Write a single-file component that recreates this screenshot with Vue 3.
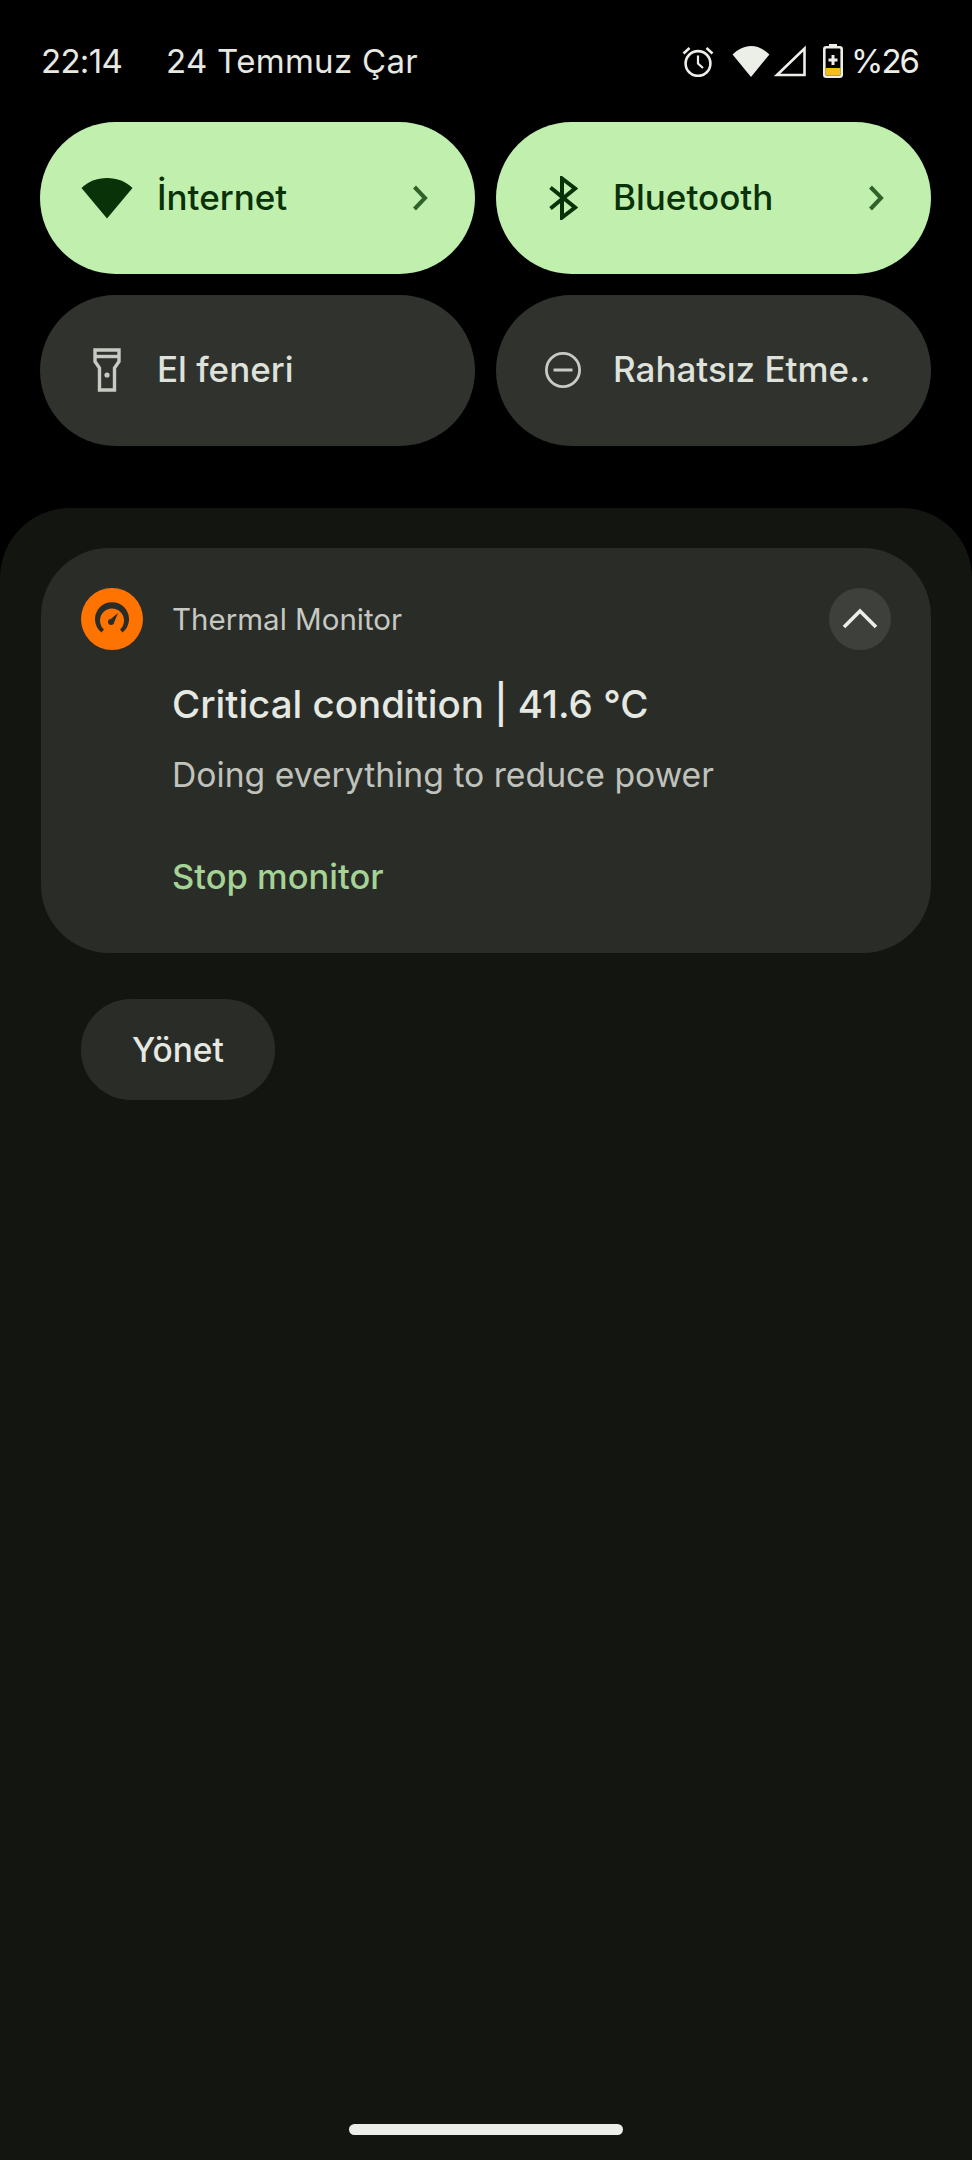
<template>
  <div class="screen">
    <div class="status">
      <span class="time">22:14</span>
      <span class="date">24 Temmuz Çar</span>
      <div class="status-icons">
        <svg class="alarm" viewBox="0 0 32 32" width="32" height="32" fill="none" stroke="#eceee8" stroke-width="2.6">
          <circle cx="16" cy="18.500" r="12.400" />
          <path d="M16 10.500V18.500L21 23" stroke-width="2.200" />
          <path d="M1.500 8.500L7.500 3M30.500 8.500L24.500 3" />
        </svg>
        <svg class="wifi" viewBox="0 0 38 32" width="38" height="32">
          <path d="M19 32L.6 9.500C5.500 4.600 12 1 19 1s13.500 3.600 18.400 8.500z" fill="#eceee8" />
        </svg>
        <svg class="signal" viewBox="0 0 32 32" width="32" height="32" fill="none" stroke="#eceee8" stroke-width="2.6">
          <path d="M3 30L30.500 3.500V30z" />
        </svg>
        <svg class="battery" viewBox="0 0 20 34" width="20" height="34">
          <rect x="6" y="0" width="8" height="4" fill="#eceee8" />
          <rect x="1.300" y="3.300" width="17.400" height="29.400" rx="2" fill="none" stroke="#eceee8" stroke-width="2.600" />
          <rect x="2.500" y="24" width="15" height="7.500" fill="#f4bd1e" />
          <path d="M10 11v10M5.500 16h9" stroke="#eceee8" stroke-width="3" />
        </svg>
        <span class="pct">%26</span>
      </div>
    </div>

    <div class="tiles">
      <div v-for="t in tiles" :key="t.label" class="tile" :class="{ on: t.on }">
        <span class="tile-icon">
          <svg v-if="t.icon === 'wifi'" viewBox="0 0 52 42" width="52" height="42">
            <path d="M26 41.500L.5 11C7 4.500 16 1 26 1s19 3.500 25.500 10z" fill="#0a3208" />
          </svg>
          <svg v-else-if="t.icon === 'bt'" viewBox="0 0 30 44" width="30" height="44" fill="none" stroke="#0a3208" stroke-width="4">
            <path d="M2.500 11.500L27 31.500 14 41.500V2.500L27 12.500 2.500 32.500" />
          </svg>
          <svg v-else-if="t.icon === 'torch'" viewBox="0 0 28 44" width="28" height="44" fill="none" stroke="#c8cac4" stroke-width="3.400">
            <path d="M2 2h24v11.500L21.500 20v22h-15V20L2 13.500z" />
            <path d="M2 8.500h24" />
            <circle cx="14" cy="27" r="2.600" fill="#c8cac4" stroke="none" />
          </svg>
          <svg v-else viewBox="0 0 38 38" width="38" height="38" fill="none" stroke="#c8cac4" stroke-width="2.800">
            <circle cx="19" cy="19" r="16.600" />
            <path d="M9.500 19h19" stroke-width="3" />
          </svg>
        </span>
        <span class="tile-label">{{ t.label }}</span>
        <svg v-if="t.on" class="chev" viewBox="0 0 16 26" width="16" height="26" fill="none" stroke="#2f6128" stroke-width="4">
          <path d="M2.500 2L13 13 2.500 24" />
        </svg>
      </div>
    </div>

    <div class="panel">
      <div class="card">
        <div class="card-head">
          <span class="app-icon">
            <svg viewBox="0 0 36 36" width="36" height="36">
              <path d="M7.500 31.500A17 17 0 1 1 28.500 31.500L26 28.500A12 12 0 1 0 10 28.500z" fill="#2a2c28" />
              <path d="M15 19.500L24 12 19.500 23z" fill="#2a2c28" />
              <circle cx="17" cy="21" r="3" fill="#2a2c28" />
            </svg>
          </span>
          <span class="app-name">Thermal Monitor</span>
          <span class="expand">
            <svg viewBox="0 0 36 22" width="36" height="22" fill="none" stroke="#eceee8" stroke-width="3.600">
              <path d="M2 19L18 3 34 19" />
            </svg>
          </span>
        </div>
        <div class="card-body">
          <div class="title">Critical condition | 41.6 °C</div>
          <div class="subtitle">Doing everything to reduce power</div>
          <div class="action">Stop monitor</div>
        </div>
      </div>
      <div class="manage">Yönet</div>
      <div class="home-bar"></div>
    </div>
  </div>
</template>

<script setup>
const tiles = [
  { label: 'İnternet', icon: 'wifi', on: true },
  { label: 'Bluetooth', icon: 'bt', on: true },
  { label: 'El feneri', icon: 'torch', on: false },
  { label: 'Rahatsız Etme..', icon: 'dnd', on: false },
]
</script>

<style>
html, body {
  margin: 0;
  background: #000;
}
</style>

<style scoped>
.screen {
  width: 972px;
  height: 2160px;
  background: #000;
  display: flex;
  flex-direction: column;
  font-family: "Inter", "Liberation Sans", sans-serif;
  overflow: hidden;
}

.status {
  height: 122px;
  box-sizing: border-box;
  padding: 42px 54px 0 41px;
  display: flex;
  align-items: flex-start;
  color: #e6e8e2;
  font-size: 33px;
  line-height: 38px;
}

.time {
  letter-spacing: -0.7px;
}

.date {
  margin-left: 44px;
  letter-spacing: 0.3px;
}

.status-icons {
  margin-left: auto;
  display: flex;
  align-items: center;
  height: 38px;
}

.wifi {
  margin-left: 18px;
}

.signal {
  margin-left: 4px;
}

.battery {
  margin-left: 17px;
}

.pct {
  margin-left: 8px;
  color: #eceee8;
  letter-spacing: -2px;
}

.tiles {
  display: grid;
  grid-template-columns: 435px 435px;
  grid-auto-rows: 151.5px;
  gap: 21px;
  padding: 0 41px 0 40px;
}

.tile {
  border-radius: 76px;
  background: #30322e;
  color: #dfe1db;
  display: flex;
  align-items: center;
  box-sizing: border-box;
  padding: 0 47px 0 40px;
  font-size: 35px;
  font-weight: 500;
}

.tile.on {
  background: #c1f0ae;
  color: #0a3208;
}

.tile-icon {
  width: 54px;
  display: flex;
  justify-content: center;
  margin-right: 23px;
}

.tile-label {
  flex: 1;
  white-space: nowrap;
  padding-bottom: 2px;
}

.panel {
  flex: 1;
  margin-top: 62px;
  background: #121510;
  border-radius: 70px 70px 0 0;
  padding: 40px 41px 0;
  position: relative;
}

.card {
  height: 405px;
  box-sizing: border-box;
  background: #2a2c28;
  border-radius: 68px;
  padding: 40px 40px 0;
}

.card-head {
  display: flex;
  align-items: center;
  height: 62px;
}

.app-icon {
  width: 62px;
  height: 62px;
  border-radius: 50%;
  background: #ff7300;
  display: flex;
  align-items: center;
  justify-content: center;
}

.app-name {
  margin-left: 29px;
  color: #c6c8c2;
  font-size: 29.500px;
}

.expand {
  margin-left: auto;
  width: 62px;
  height: 62px;
  border-radius: 50%;
  background: #3e403c;
  display: flex;
  align-items: center;
  justify-content: center;
}

.card-body {
  margin-left: 91px;
}

.title {
  margin-top: 29px;
  color: #e6e8e2;
  font-size: 38.500px;
  font-weight: 500;
  line-height: 50px;
}

.subtitle {
  margin-top: 26px;
  color: #c0c2bc;
  font-size: 33.700px;
  line-height: 40px;
}

.action {
  margin-top: 62px;
  color: #a5d394;
  font-size: 34.500px;
  font-weight: 500;
  line-height: 40px;
}

.manage {
  margin: 46px 0 0 40px;
  width: 194px;
  height: 101px;
  border-radius: 50px;
  background: #2a2c28;
  color: #e6e8e2;
  font-size: 33.500px;
  font-weight: 500;
  display: flex;
  align-items: center;
  justify-content: center;
}

.home-bar {
  position: absolute;
  left: 349px;
  top: 1616px;
  width: 274px;
  height: 11px;
  border-radius: 6px;
  background: #eceee9;
}
</style>
